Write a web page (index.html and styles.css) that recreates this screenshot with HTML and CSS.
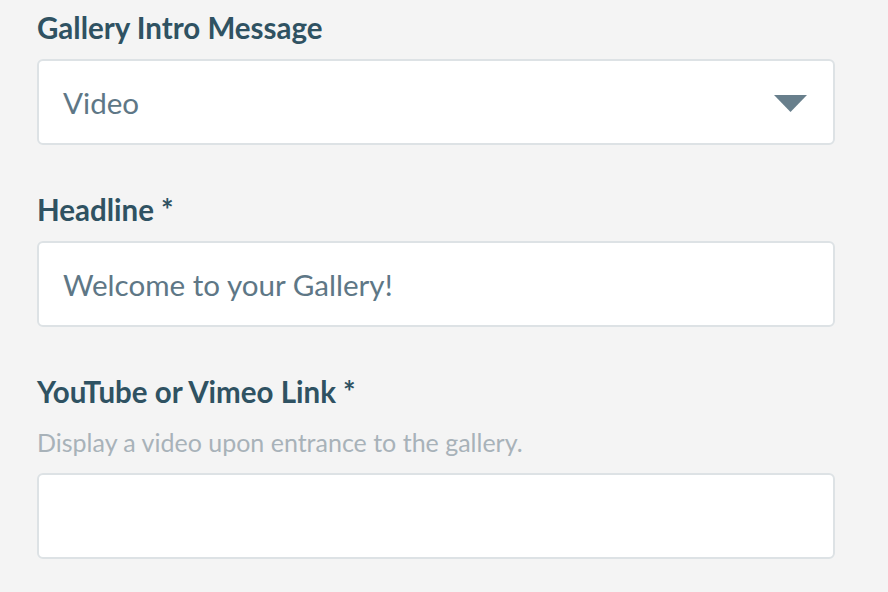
FILE: index.html
```html
<!DOCTYPE html>
<html>
<head>
<meta charset="utf-8">
<link rel="stylesheet" href="styles.css">
</head>
<body>
<form class="form">
  <div class="field">
    <label class="label">Gallery Intro Message</label>
    <div class="control select">
      <span class="value">Video</span>
      <svg class="caret" width="33" height="17" viewBox="0 0 33 17"><polygon points="0,0 33,0 16.5,17" fill="#687f8c"/></svg>
    </div>
  </div>
  <div class="field">
    <label class="label">Headline *</label>
    <div class="control"><span class="value">Welcome to your Gallery!</span></div>
  </div>
  <div class="field">
    <label class="label">YouTube or Vimeo Link *</label>
    <div class="help">Display a video upon entrance to the gallery.</div>
    <div class="control"></div>
  </div>
</form>
</body>
</html>
```
FILE: styles.css
```css
html, body {
  margin: 0;
  padding: 0;
  background: #f4f4f4;
}
body {
  font-family: Lato, "Open Sans", sans-serif;
}
.form {
  width: 798px;
  margin-left: 37px;
  padding-top: 11px;
  display: flex;
  flex-direction: column;
  gap: 48px;
}
.field {
  display: flex;
  flex-direction: column;
}
.label {
  font-size: 29.5px;
  font-weight: 700;
  color: #2f5262;
  line-height: 34px;
  margin-bottom: 14px;
}
.help {
  font-size: 25px;
  color: #a8b2b9;
  line-height: 30px;
  margin-top: 18px;
  margin-bottom: 16px;
}
.label + .help {
  margin-top: 4px;
}
.control {
  box-sizing: border-box;
  height: 86px;
  background: #fff;
  border: 2px solid #dde2e5;
  border-radius: 6px;
  display: flex;
  align-items: center;
  padding: 0 26px 0 24px;
}
.value {
  font-size: 29.6px;
  color: #5e7786;
}
.select {
  justify-content: space-between;
}
.caret {
  display: block;
  margin-top: 3px;
}
```
